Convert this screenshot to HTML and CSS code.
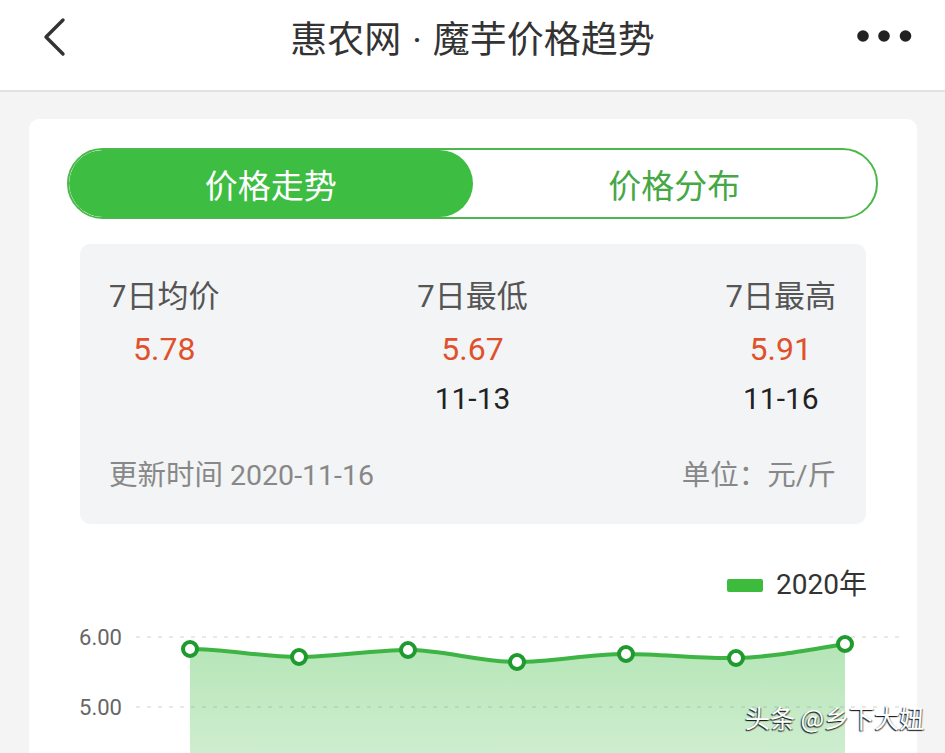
FILE: index.html
```html
<!DOCTYPE html>
<html lang="zh-CN">
<head>
<meta charset="utf-8">
<title>惠农网·魔芋价格趋势</title>
<link rel="stylesheet" href="styles.css">
</head>
<body>
<header class="topbar">
  <div class="topbar-left">
    <svg class="back" width="24" height="40" viewBox="0 0 24 40">
      <path d="M20 3 L3 20 L20 37" fill="none" stroke="#333" stroke-width="3.4" stroke-linecap="round" stroke-linejoin="round"/>
    </svg>
  </div>
  <h1 class="title">惠农网<span class="title-dot">·</span>魔芋价格趋势</h1>
  <div class="topbar-right">
    <svg class="more" width="56" height="14" viewBox="0 0 56 14">
      <circle cx="7" cy="7" r="5.8" fill="#222"/>
      <circle cx="28" cy="7" r="5.8" fill="#222"/>
      <circle cx="49.5" cy="7" r="5.8" fill="#222"/>
    </svg>
  </div>
</header>

<main class="page">
  <section class="card">
    <div class="tabs">
      <div class="tab tab-active">价格走势</div>
      <div class="tab">价格分布</div>
    </div>

    <div class="stats">
      <div class="stats-row">
        <div class="stat">
          <div class="stat-label">7日均价</div>
          <div class="stat-value">5.78</div>
        </div>
        <div class="stat">
          <div class="stat-label">7日最低</div>
          <div class="stat-value">5.67</div>
          <div class="stat-date">11-13</div>
        </div>
        <div class="stat">
          <div class="stat-label">7日最高</div>
          <div class="stat-value">5.91</div>
          <div class="stat-date">11-16</div>
        </div>
      </div>
      <div class="stats-foot">
        <span>更新时间 2020-11-16</span>
        <span>单位：元/斤</span>
      </div>
    </div>

    <svg class="chart" width="888" height="240" viewBox="0 0 888 240">
      <defs>
        <linearGradient id="area" x1="0" y1="0" x2="0" y2="1">
          <stop offset="0" stop-color="#3dbb41" stop-opacity="0.38"/>
          <stop offset="1" stop-color="#3dbb41" stop-opacity="0.24"/>
        </linearGradient>
      </defs>
      <rect x="698" y="55" width="36" height="13" rx="2" fill="#3dbb3d"/>
      <text class="legend-text" x="747" y="70">2020年</text>

      <line x1="107" y1="113" x2="872" y2="113" class="grid"/>
      <line x1="107" y1="183" x2="872" y2="183" class="grid"/>
      <text class="axis" x="93" y="121" text-anchor="end">6.00</text>
      <text class="axis" x="93" y="191" text-anchor="end">5.00</text>

      <path d="M161,125 C197,125 233,133 270,133 C306,133 342,126 379,126 C415,126 451,138 488,138 C524,138 560,130 597,130 C634,130 670,135 707,134 C744,133 780,126 816,120 L816,240 L161,240 Z" fill="url(#area)"/>
      <path d="M161,125 C197,125 233,133 270,133 C306,133 342,126 379,126 C415,126 451,138 488,138 C524,138 560,130 597,130 C634,130 670,135 707,134 C744,133 780,126 816,120" fill="none" stroke="#3db443" stroke-width="4" stroke-linecap="round"/>
      <g fill="#fff" stroke="#1f9a2e" stroke-width="4">
        <circle cx="161" cy="125" r="7"/>
        <circle cx="270" cy="133" r="7"/>
        <circle cx="379" cy="126" r="7"/>
        <circle cx="488" cy="138" r="7"/>
        <circle cx="597" cy="130" r="7"/>
        <circle cx="707" cy="134" r="7"/>
        <circle cx="816" cy="120" r="7"/>
      </g>
    </svg>
  </section>
</main>

<div class="watermark">头条 @乡下大妞</div>
</body>
</html>
```

FILE: styles.css
```css
html, body {
  margin: 0;
  padding: 0;
  height: 753px;
  overflow: hidden;
}

body {
  background: #f4f4f4;
  font-family: Roboto, "Noto Sans CJK SC", "Noto Sans", sans-serif;
  color: #333;
  position: relative;
}

.topbar {
  height: 90px;
  background: #fff;
  border-bottom: 2px solid #e2e2e2;
  display: grid;
  grid-template-columns: 1fr auto 1fr;
  align-items: center;
  box-sizing: content-box;
}

.topbar-left {
  padding-left: 43px;
  display: flex;
  align-items: center;
  margin-top: -16px;
}

.topbar-right {
  display: flex;
  justify-content: flex-end;
  padding-right: 33px;
  margin-top: -18px;
}

.back, .more {
  display: block;
}

.title {
  margin: 0;
  font-size: 37px;
  font-weight: 400;
  line-height: 1;
  color: #333;
  margin-top: -10px;
}

.title-dot {
  display: inline-block;
  margin: 0 11px;
}

.page {
  padding: 27px 28px 0 29px;
}

.card {
  background: #fff;
  border-radius: 10px;
  padding-top: 29px;
}

.tabs {
  margin: 0 39px 0 38px;
  height: 71px;
  box-sizing: border-box;
  border: 2px solid #4cb84c;
  border-radius: 36px;
  display: flex;
  overflow: hidden;
}

.tab {
  flex: 1;
  display: flex;
  align-items: center;
  justify-content: center;
  font-size: 33px;
  color: #45a845;
  border-radius: 34px;
}

.tab-active {
  background: #3dbd41;
  color: #fff;
}

.stats {
  margin: 25px 51px 0;
  background: #f2f4f5;
  border-radius: 10px;
  padding: 33px 30px 28px 29px;
}

.stats-row {
  display: flex;
  justify-content: space-between;
  align-items: flex-start;
}

.stat {
  display: flex;
  flex-direction: column;
  align-items: center;
}

.stat-label {
  font-size: 31px;
  line-height: 40px;
  color: #555;
}

.stat-value {
  margin-top: 12px;
  font-size: 32px;
  line-height: 40px;
  color: #e0512b;
}

.stat-date {
  margin-top: 10px;
  font-size: 30px;
  line-height: 40px;
  color: #222;
}

.stats-foot {
  margin-top: 37px;
  display: flex;
  justify-content: space-between;
  font-size: 28.5px;
  line-height: 40px;
  color: #888;
}

.chart {
  display: block;
}

.grid {
  stroke: #e8e8e8;
  stroke-width: 2;
  stroke-dasharray: 4 7;
}

.axis {
  font-family: Roboto, sans-serif;
  font-size: 22px;
  fill: #666;
}

.legend-text {
  font-family: Roboto, "Noto Sans CJK SC", sans-serif;
  font-size: 28px;
  fill: #333;
}

.watermark {
  position: absolute;
  left: 745px;
  top: 705px;
  font-size: 25px;
  line-height: 1;
  color: #fff;
  font-family: "Noto Sans CJK SC", sans-serif;
  text-shadow: -1px 1px 1px rgba(0, 0, 0, 0.85), 1px 1px 1px rgba(0, 0, 0, 0.5);
}
```
